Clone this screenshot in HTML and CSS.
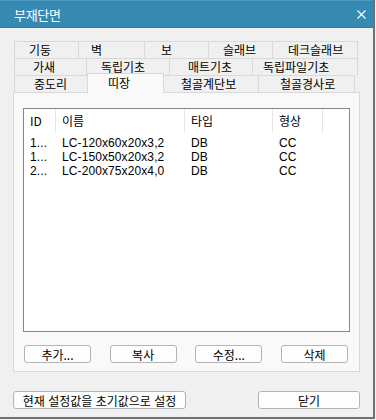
FILE: index.html
```html
<!DOCTYPE html>
<html lang="ko">
<head>
  <meta charset="UTF-8">
  <title>부재단면</title>
  <link rel="stylesheet" href="styles.css">
</head>
<body>
  <div class="dlg">
    <div class="titlebar">
      <span class="title">부재단면</span>
      <svg class="close" width="9" height="9" viewBox="0 0 9 9">
        <path d="M0.5 0.5 L8.5 8.5 M8.5 0.5 L0.5 8.5" stroke="#fff" stroke-width="1.1" fill="none"/>
      </svg>
    </div>

    <div class="content">
      <div class="tabs">
        <div class="tab-row">
          <div class="tab w64 p14">기둥</div>
          <div class="tab w66 p12">벽</div>
          <div class="tab w64 p16">보</div>
          <div class="tab w64 p14">슬래브</div>
          <div class="tab w86 p15 last">데크슬래브</div>
        </div>
        <div class="tab-row">
          <div class="tab w72 p18">가새</div>
          <div class="tab w83 p14">독립기초</div>
          <div class="tab w83 p18">매트기초</div>
          <div class="tab w106 p10 last">독립파일기초</div>
        </div>
        <div class="tab-row">
          <div class="tab w74 p19">중도리</div>
          <div class="tab w77 p20 active">띠장</div>
          <div class="tab w96 p18">철골계단보</div>
          <div class="tab w97 p21 last">철골경사로</div>
        </div>
      </div>

      <div class="panel">
        <div class="listview">
          <div class="lv-head">
            <div class="cell">ID</div>
            <div class="cell">이름</div>
            <div class="cell">타입</div>
            <div class="cell">형상</div>
            <div class="cell filler"></div>
          </div>
          <div class="lv-body">
            <div class="lv-row">
              <div class="cell">1...</div>
              <div class="cell">LC-120x60x20x3,2</div>
              <div class="cell">DB</div>
              <div class="cell">CC</div>
            </div>
            <div class="lv-row">
              <div class="cell">1...</div>
              <div class="cell">LC-150x50x20x3,2</div>
              <div class="cell">DB</div>
              <div class="cell">CC</div>
            </div>
            <div class="lv-row">
              <div class="cell">2...</div>
              <div class="cell">LC-200x75x20x4,0</div>
              <div class="cell">DB</div>
              <div class="cell">CC</div>
            </div>
          </div>
        </div>

        <div class="btn-row">
          <button class="btn">추가...</button>
          <button class="btn">복사</button>
          <button class="btn">수정...</button>
          <button class="btn">삭제</button>
        </div>
      </div>

      <div class="footer">
        <button class="btn btn-reset">현재 설정값을 초기값으로 설정</button>
        <button class="btn btn-close">닫기</button>
      </div>
    </div>
  </div>
</body>
</html>
```

FILE: styles.css
```css
body {
  margin: 0;
  background: #f0f0f0;
  font-family: "Noto Sans CJK KR", "Liberation Sans", sans-serif;
  font-size: 12px;
  color: #000;
}

.dlg {
  box-sizing: border-box;
  width: 375px;
  height: 419px;
  background: #f0f0f0;
  border-right: 2px solid #707070;
  border-bottom: 2px solid #707070;
}

.titlebar {
  height: 26px;
  background: #3589b2;
  border-top: 1px solid #4a9ac0;
  border-bottom: 1px solid #6a6a6a;
  box-sizing: content-box;
  display: flex;
  align-items: center;
  justify-content: space-between;
  padding: 0 7px 0 14px;
  color: #fff;
}

.title {
  font-size: 13px;
  letter-spacing: -0.3px;
}

.content {
  padding: 13px 0 0 13px;
}

/* tabs */
.tabs {
  margin: 0 1px;
  width: 344px;
}

.tab-row {
  display: flex;
  height: 17px;
}

.tab {
  box-sizing: border-box;
  height: 17px;
  line-height: 16px;
  border-top: 1px solid #d9d9d9;
  border-left: 1px solid #d9d9d9;
  background: #f0f0f0;
  white-space: nowrap;
}

.tab.last { border-right: 1px solid #d9d9d9; }

.tab.active {
  position: relative;
  z-index: 1;
  height: 20px;
  margin: -2px -2px -1px -1px;
  background: #f9f9f9;
  border-right: 1px solid #d9d9d9;
  line-height: 17px;
}

.w64 { width: 64px; }
.w66 { width: 66px; }
.w72 { width: 72px; }
.w74 { width: 74px; }
.w77 { width: 77px; }
.w83 { width: 83px; }
.w86 { width: 86px; }
.w96 { width: 96px; }
.w97 { width: 97px; }
.w106 { width: 106px; }

.p10 { padding-left: 10px; }
.p12 { padding-left: 12px; }
.p14 { padding-left: 14px; }
.p15 { padding-left: 15px; }
.p16 { padding-left: 16px; }
.p18 { padding-left: 18px; }
.p19 { padding-left: 19px; }
.p20 { padding-left: 20px; }
.p21 { padding-left: 21px; }

/* panel */
.panel {
  box-sizing: border-box;
  width: 347px;
  height: 280px;
  background: #f9f9f9;
  border: 1px solid #d9d9d9;
  padding: 15px 9px 0 9px;
}

.listview {
  box-sizing: border-box;
  width: 327px;
  height: 224px;
  background: #fff;
  border: 1px solid #828790;
}

.lv-head, .lv-row {
  display: grid;
  grid-template-columns: 32px 129px 88px 50px 1fr;
}

.lv-head {
  height: 24px;
  line-height: 24px;
}

.lv-head .cell {
  border-right: 1px solid #e5e5e5;
}

.lv-head .filler { border-right: none; }

.cell {
  padding-left: 6px;
  white-space: nowrap;
  overflow: hidden;
}

.lv-body {
  padding-top: 3px;
}

.lv-row {
  height: 14px;
  line-height: 14px;
  font-family: "Liberation Sans", "Noto Sans CJK KR", sans-serif;
  letter-spacing: 0.1px;
}

/* buttons */
.btn {
  box-sizing: border-box;
  height: 18px;
  padding: 0;
  background: #fdfdfd;
  border: 1px solid #b4b4b4;
  border-radius: 3px;
  font-family: inherit;
  font-size: 12px;
  line-height: 15px;
  color: #000;
}

.btn-row {
  display: flex;
  justify-content: space-between;
  width: 324px;
  margin: 13px 0 0 1px;
}

.btn-row .btn { width: 67px; }

.footer {
  display: flex;
  justify-content: space-between;
  width: 347px;
  margin-top: 19px;
}

.btn-reset { width: 173px; }
.btn-close { width: 102px; }
```
